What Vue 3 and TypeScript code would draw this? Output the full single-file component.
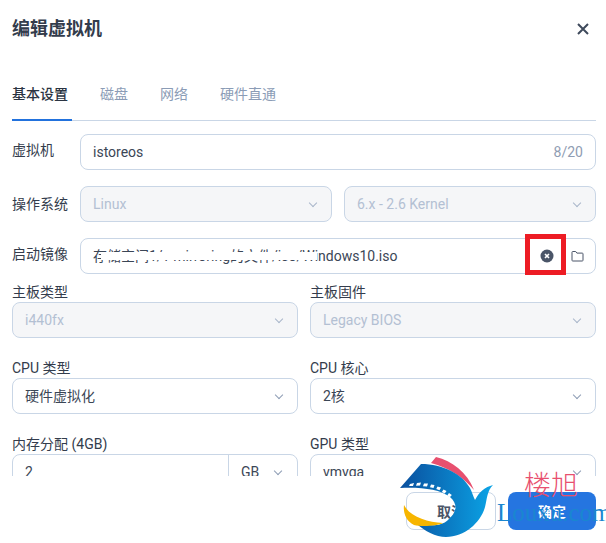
<script setup lang="ts">
const tabs = ['基本设置', '磁盘', '网络', '硬件直通']
</script>

<template>
  <div class="dialog">
    <header class="head">
      <h1 class="title">编辑虚拟机</h1>
      <svg class="close" width="14" height="14" viewBox="0 0 14 14" aria-label="关闭">
        <path d="M2 2l10 10M12 2L2 12" stroke="#3f4a5c" stroke-width="2" fill="none" />
      </svg>
    </header>

    <nav class="tabs">
      <span v-for="(t, i) in tabs" :key="t" class="tab" :class="{ active: i === 0 }">{{ t }}</span>
    </nav>

    <main class="body">
      <div class="row">
        <label class="side">虚拟机</label>
        <div class="box grow">
          <span class="val">istoreos</span>
          <span class="count">8/20</span>
        </div>
      </div>

      <div class="row">
        <label class="side level">操作系统</label>
        <div class="pair grow">
          <div class="box off"><span class="val">Linux</span><i class="chev"></i></div>
          <div class="box off"><span class="val">6.x - 2.6 Kernel</span><i class="chev"></i></div>
        </div>
      </div>

      <div class="row">
        <label class="side">启动镜像</label>
        <div class="box grow image">
          <span class="val path">存储空间1/v-mirroring的文件/iso/Windows10.iso<b class="erase"></b></span>
          <svg class="clear" width="14" height="14" viewBox="0 0 14 14">
            <circle cx="7" cy="7" r="6.500" fill="#4a5568" />
            <path d="M5 5l4 4M9 5l-4 4" stroke="#fff" stroke-width="1.600" />
          </svg>
          <svg class="folder" width="13" height="12" viewBox="0 0 13 12">
            <path d="M1 2.200c0-.4.3-.7.7-.7h3l1.200 1.600h5.400c.4 0 .7.3.7.7v6.500c0 .4-.3.7-.7.7H1.700c-.4 0-.7-.3-.7-.7z" fill="none" stroke="#4a5568" stroke-width="1" />
          </svg>
        </div>
      </div>

      <div class="grid">
        <div class="field">
          <label class="top">主板类型</label>
          <div class="box off"><span class="val">i440fx</span><i class="chev"></i></div>
        </div>
        <div class="field">
          <label class="top">主板固件</label>
          <div class="box off"><span class="val">Legacy BIOS</span><i class="chev"></i></div>
        </div>
        <div class="field">
          <label class="top">CPU 类型</label>
          <div class="box"><span class="val">硬件虚拟化</span><i class="chev"></i></div>
        </div>
        <div class="field">
          <label class="top">CPU 核心</label>
          <div class="box"><span class="val">2核</span><i class="chev"></i></div>
        </div>
        <div class="field">
          <label class="top">内存分配 (4GB)</label>
          <div class="box split">
            <span class="val num">2</span>
            <span class="unit"><span class="val">GB</span><i class="chev"></i></span>
          </div>
        </div>
        <div class="field">
          <label class="top">GPU 类型</label>
          <div class="box"><span class="val">vmvga</span><i class="chev"></i></div>
        </div>
      </div>
    </main>

    <footer class="foot">
      <button class="btn ghost">取消</button>
      <button class="btn primary">确定</button>
    </footer>

    <div class="mark-box"></div>

    <svg class="logo" width="110" height="90" viewBox="395 452 110 90">
      <defs>
        <linearGradient id="lg" x1="0" x2="1" y1="0" y2="0">
          <stop offset="0" stop-color="#0a4f9e" />
          <stop offset="1" stop-color="#0ba4e6" />
        </linearGradient>
      </defs>
      <path d="M431 463L436 457C452 461 467 472 474 490C463 477 449 468 431 463z" fill="#e8506f" />
      <path d="M400 488L421 464C443 464 462 474 470 488C472 492 473 496 475 500C479 492 485 487 493 485C487 491 487 499 485 507C481 522 465 537 446 537C436 537 424 531 416 523C428 526 441 527 448 520C456 513 459 505 450 497C440 489 420 487 400 488z" fill="url(#lg)" />
      <path d="M404 505C410 517 427 522 443 523C437 526 422 527 414 525C406 521 403 513 404 505z" fill="#f7b500" />
      <g fill="#fff">
        <path d="M410 484l4-1-1 3-4 0z" />
        <path d="M417 483l4-.5-1 3-4 .2z" />
        <path d="M424 483.500l4 0-1 3-4-.2z" />
        <path d="M431 484.500l3.500.5-1 3-3.500-.7z" />
        <path d="M437.500 486.500l3.500 1-1.500 2.800-3.200-1.200z" />
        <path d="M443.500 489.500l3 1.500-1.700 2.500-3-1.500z" />
        <path d="M449 493l2.800 2-2 2.300-2.600-1.900z" />
      </g>
    </svg>
    <span class="wm-cn">楼旭</span>
    <span class="wm-en">Louxu.com</span>
  </div>
</template>

<style>
html, body { margin: 0; background: #fff; }
</style>

<style scoped>
.dialog {
  position: relative;
  width: 606px;
  height: 543px;
  overflow: hidden;
  background: #fff;
  display: flex;
  flex-direction: column;
  box-sizing: border-box;
  padding: 0 10px 13px 12px;
  color: #333c4c;
  font-family: Roboto, "Noto Sans CJK SC", sans-serif;
  font-size: 14px;
}
.head {
  height: 58px;
  flex: none;
  display: flex;
  align-items: center;
  justify-content: space-between;
}
.title {
  margin: 0;
  font-size: 18px;
  font-weight: 700;
  color: #333c4c;
  line-height: 24px;
}
.close { margin-right: 6px; }
.tabs {
  height: 63px;
  flex: none;
  box-sizing: border-box;
  display: flex;
  gap: 28px;
  border-bottom: 1px solid #c9d6e6;
}
.tab {
  height: 62px;
  box-sizing: border-box;
  padding-top: 25px;
  line-height: 22px;
  color: #8b9cb6;
  margin-right: 4px;
}
.tab:first-child { margin-right: 0; }
.tab.active {
  color: #2b3442;
  font-weight: 500;
  width: 60px;
  border-bottom: 2px solid #2272dd;
  height: 63px;
}
.body {
  flex: 1;
  min-height: 0;
  overflow: hidden;
  padding-top: 13px;
}
.row {
  display: flex;
  align-items: center;
  margin-bottom: 16px;
}
.side {
  width: 68px;
  flex: none;
  margin-top: -4px;
  line-height: 20px;
}
.side.level { margin-top: 0; }
.grow { flex: 1; min-width: 0; }
.pair {
  display: grid;
  grid-template-columns: 1fr 1fr;
  gap: 12px;
}
.box {
  height: 36px;
  box-sizing: border-box;
  border: 1px solid #c9d6e6;
  border-radius: 8px;
  padding: 0 12px;
  display: flex;
  align-items: center;
  justify-content: space-between;
  background: #fff;
  color: #3b4656;
}
.image { padding-right: 11px; }
.val { white-space: nowrap; line-height: 20px; }
.count { color: #8f9db3; }
.off { background: #f5f6f8; color: #b3c0d3; }
.chev {
  width: 5px;
  height: 5px;
  flex: none;
  margin: -3px 3px 0 0;
  border-right: 1px solid #8e9db5;
  border-bottom: 1px solid #8e9db5;
  transform: rotate(45deg);
}
.off .chev { border-color: #a9b6ca; }
.path {
  position: relative;
  flex: 1;
  min-width: 0;
}
.erase {
  position: absolute;
  left: 8px;
  top: 6px;
  width: 216px;
  height: 8px;
  background: #fff;
}
.clear { flex: none; margin: 0 17px 0 0; }
.folder { flex: none; }
.grid {
  display: grid;
  grid-template-columns: 1fr 1fr;
  column-gap: 12px;
  row-gap: 20px;
  margin-top: -8px;
}
.top {
  display: block;
  line-height: 20px;
  height: 20px;
}
.split { padding: 0; }
.num { flex: 1; padding-left: 12px; }
.unit {
  width: 69px;
  height: 100%;
  flex: none;
  box-sizing: border-box;
  border-left: 1px solid #c9d6e6;
  display: flex;
  align-items: center;
  justify-content: space-between;
  padding: 0 13px 0 12px;
}
.foot {
  flex: none;
  display: flex;
  justify-content: flex-end;
  gap: 12px;
  padding-top: 16px;
}
.btn {
  height: 38px;
  border-radius: 8px;
  font: inherit;
  font-weight: 700;
  padding: 0;
}
.ghost {
  width: 90px;
  background: #fff;
  border: 1px solid #c9d6e6;
  color: #4a5568;
}
.primary {
  width: 88px;
  background: #2575e0;
  border: none;
  color: #fff;
}
.mark-box {
  position: absolute;
  left: 525px;
  top: 234px;
  width: 41px;
  height: 41px;
  box-sizing: border-box;
  border: 5px solid #ed1c24;
}
.logo {
  position: absolute;
  left: 395px;
  top: 452px;
}
.wm-cn {
  position: absolute;
  left: 524px;
  top: 467px;
  font-size: 27px;
  line-height: 38px;
  font-weight: 300;
  color: #e8506f;
}
.wm-en {
  position: absolute;
  left: 497px;
  top: 498px;
  font-family: "Liberation Serif", serif;
  font-size: 25px;
  line-height: 30px;
  color: #1a86d0;
}
</style>
